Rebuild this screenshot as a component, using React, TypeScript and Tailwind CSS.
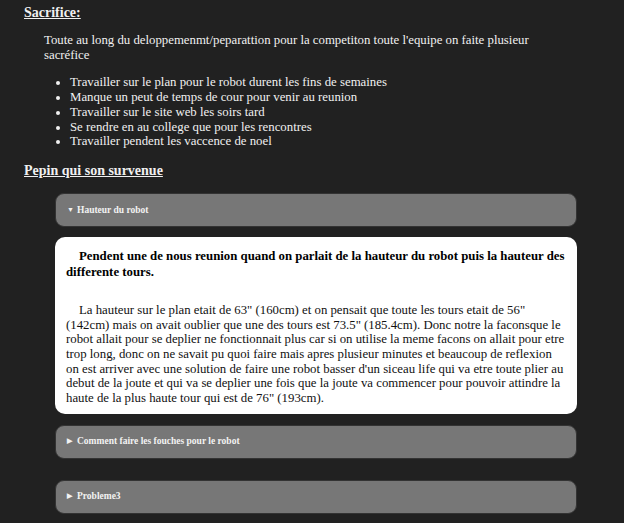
const sacrifices = [
	"Travailler sur le plan pour le robot durent les fins de semaines",
	"Manque un peut de temps de cour pour venir au reunion",
	"Travailler sur le site web les soirs tard",
	"Se rendre en au college que pour les rencontres",
	"Travailler pendent les vaccence de noel",
];

function Summary({ open, label }: { open?: boolean; label: string }) {
	return (
		<div className="flex items-center h-[34px] pl-[11px] pr-[11px] bg-[#777777] border border-[#333333] rounded-[9px] text-[9.5px] font-bold text-[#f2f2f2]">
			<span className="w-[10px] text-[7px]">{open ? "▼" : "▶"}</span>
			{label}
		</div>
	);
}

export default function App() {
	return (
		<div className="min-h-screen bg-[#212121] text-[#f0f0f0] text-[12.8px] leading-[14.7px] pb-[8px]" style={{ fontFamily: '"Liberation Serif", "Times New Roman", serif' }}>
			<h3 className="pl-[24px] pt-[4px] text-[14px] leading-[17px] font-bold underline">Sacrifice:</h3>
			<p className="pl-[44px] pr-[90px] mt-[12px]">
				Toute au long du deloppemenmt/peparattion pour la competiton toute l'equipe on faite plusieur sacréfice
			</p>
			<ul className="mt-[13px] pl-[70px] list-disc">
				{sacrifices.map((s) => (
					<li key={s}>{s}</li>
				))}
			</ul>

			<h3 className="pl-[24px] mt-[13px] text-[14px] leading-[17px] font-bold underline">Pepin qui son survenue</h3>

			<div className="mx-[55px] w-[522px] mt-[14px]">
				<Summary open label="Hauteur du robot" />
				<div className="mt-[10px] bg-white text-black rounded-[10px] px-[11px] pt-[11px] pb-[8px]">
					<p className="font-bold text-[12.8px] leading-[16px] indent-[13px]">
						Pendent une de nous reunion quand on parlait de la hauteur du robot puis la hauteur des differente tours.
					</p>
					<p className="mt-[23px] indent-[13px] text-[#111]">
						La hauteur sur le plan etait de 63" (160cm) et on pensait que toute les tours etait de 56" (142cm) mais on avait
						oublier que une des tours est 73.5" (185.4cm). Donc notre la faconsque le robot allait pour se deplier ne
						fonctionnait plus car si on utilise la meme facons on allait pour etre trop long, donc on ne savait pu quoi faire
						mais apres plusieur minutes et beaucoup de reflexion on est arriver avec une solution de faire une robot basser
						d'un siceau life qui va etre toute plier au debut de la joute et qui va se deplier une fois que la joute va
						commencer pour pouvoir attindre la haute de la plus haute tour qui est de 76" (193cm).
					</p>
				</div>
				<div className="mt-[11px]">
					<Summary label="Comment faire les fouches pour le robot" />
				</div>
				<div className="mt-[21px]">
					<Summary label="Probleme3" />
				</div>
			</div>
		</div>
	);
}
